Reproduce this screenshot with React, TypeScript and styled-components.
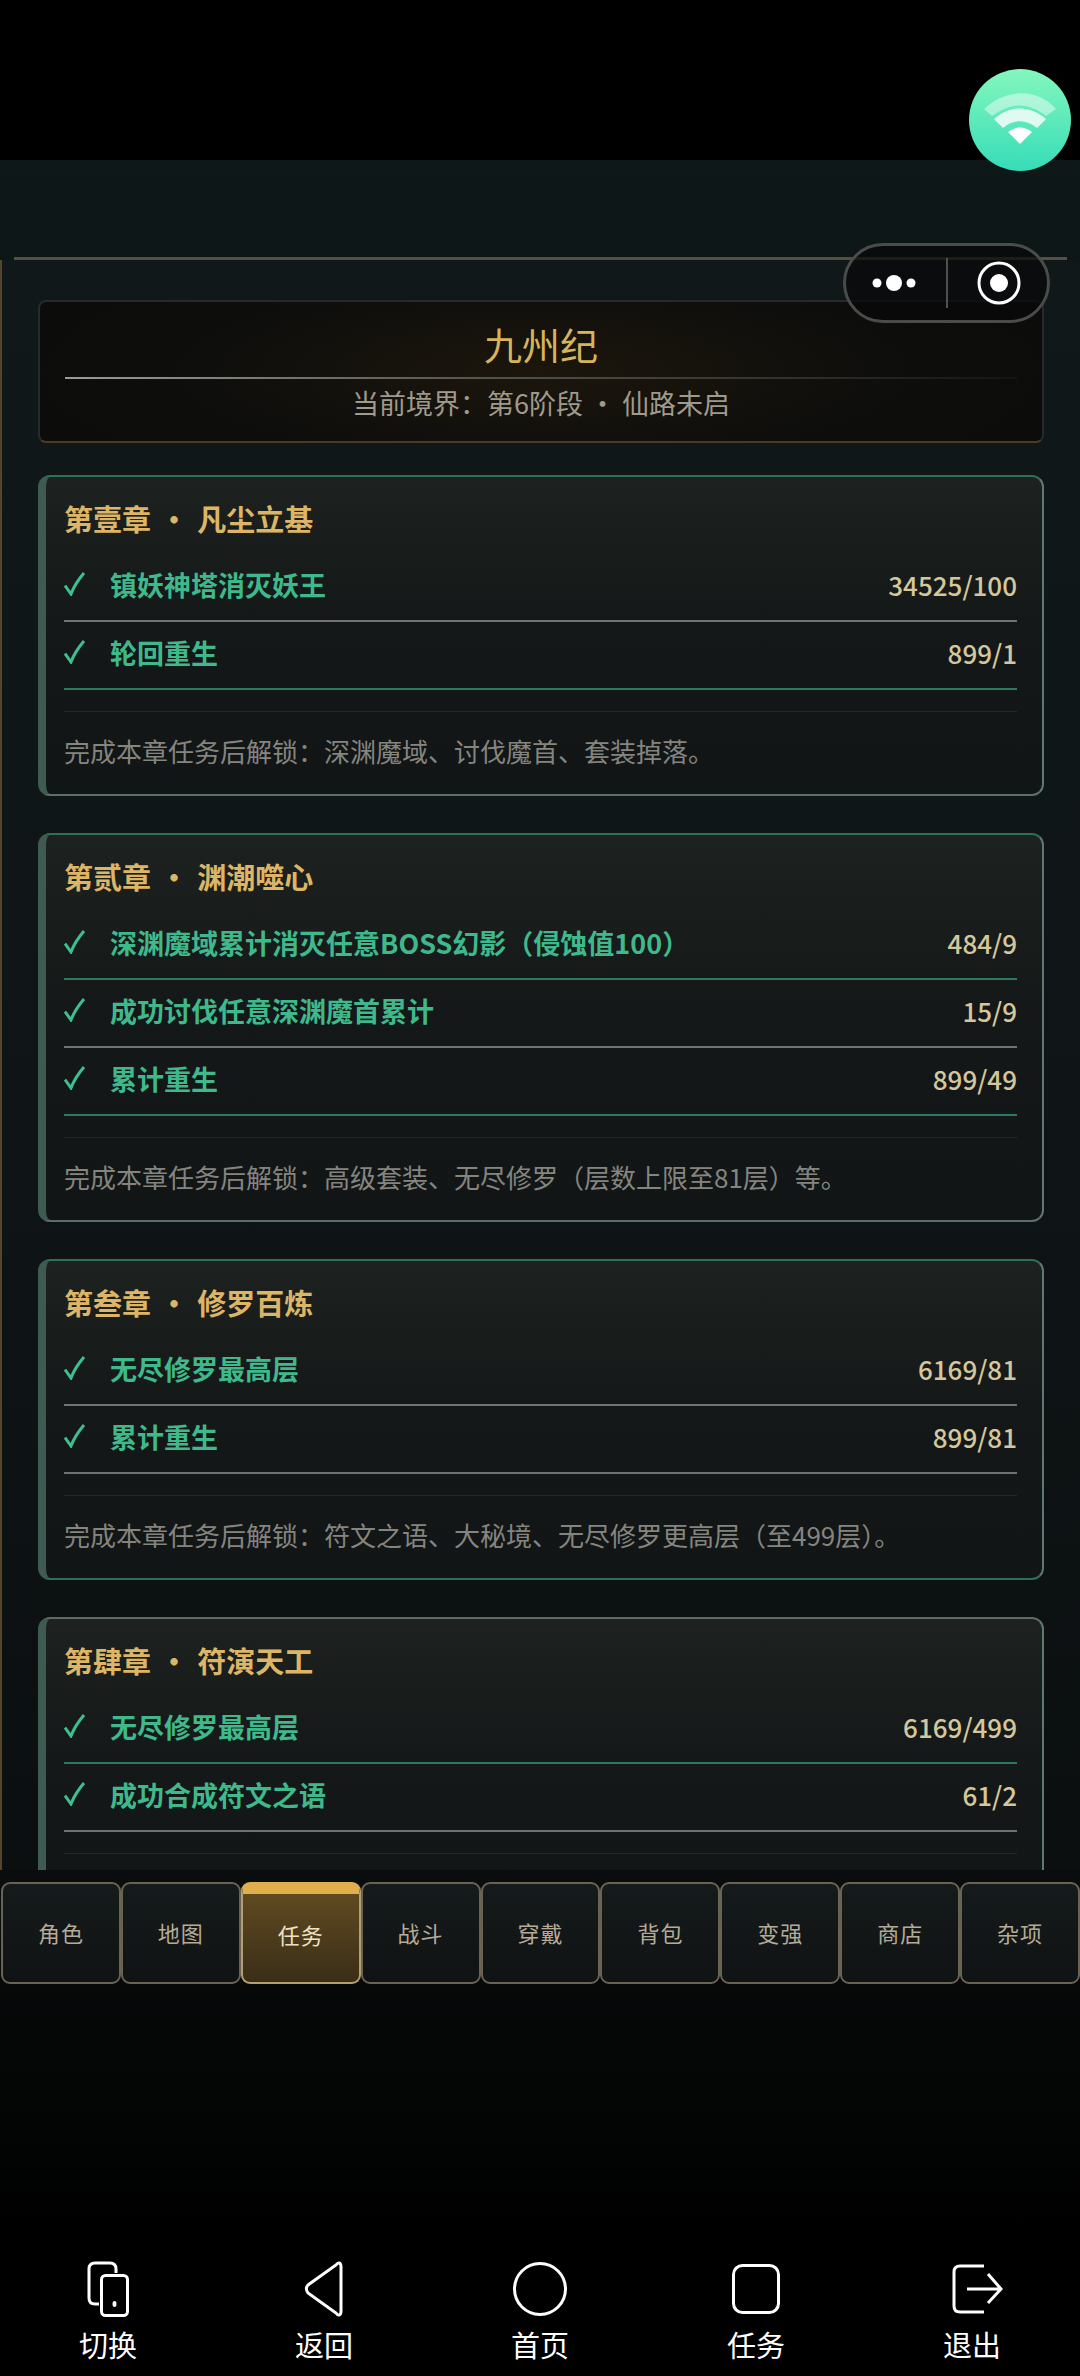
import { FunctionComponent } from "react";
import styled, { createGlobalStyle } from "styled-components";

const GlobalStyle = createGlobalStyle`
	html, body {
		margin: 0;
		padding: 0;
		background: #000;
		font-family: "Noto Sans CJK SC", "Noto Sans", sans-serif;
	}
	* {
		box-sizing: border-box;
	}
`;

const Screen = styled.div`
	position: relative;
	width: 1080px;
	height: 2376px;
	display: flex;
	flex-direction: column;
	overflow: hidden;
	background: #000;
`;

const TopBlack = styled.div`
	height: 160px;
	flex: none;
	background: #000;
`;

const Game = styled.div`
	flex: 1;
	display: flex;
	flex-direction: column;
	padding-top: 97px;
	background: linear-gradient(180deg, #0e1818 0%, #0d1416 12%, #0e1416 40%, #0c1012 78%, #050707 90%, #000 100%);
`;

const PanelRim = styled.div`
	height: 3px;
	flex: none;
	margin: 0 13px 0 14px;
	background: #5a4e3e;
`;

const Panel = styled.div`
	height: 1610px;
	flex: none;
	padding: 40px 36px 0 36px;
	overflow: hidden;
	border-left: 2px solid #54452c;
	background: linear-gradient(180deg, #10181a 0%, #0f1517 50%, #0b0f10 100%);
	display: flex;
	flex-direction: column;
	gap: 37px;
`;

const Header = styled.div`
	flex: none;
	height: 143px;
	margin-bottom: -5px;
	display: flex;
	flex-direction: column;
	align-items: center;
	padding: 0 25px;
	border: 2px solid #252b2c;
	border-bottom-color: #4a3b29;
	border-radius: 8px;
	background: radial-gradient(ellipse 50% 90% at 50% 50%, #1c160c 0%, #0e0e0c 70%, #0c0c0b 100%);
`;

const Title = styled.div`
	height: 75px;
	line-height: 84px;
	font-size: 38px;
	color: #d6b45c;
`;

const HeaderRule = styled.div`
	width: 100%;
	height: 2px;
	flex: none;
	background: linear-gradient(90deg, #9a9c96 0%, #50524e 45%, rgba(80, 80, 80, 0.1) 100%);
`;

const Subtitle = styled.div`
	line-height: 47px;
	font-size: 27px;
	color: #a09a8d;
`;

const Card = styled.section<{ $greyTop?: boolean; $greenBottom?: boolean }>`
	flex: none;
	padding: 0 25px 0 18px;
	border: 2px solid #5c7a70;
	border-top-color: ${(p) => (p.$greyTop ? "#5f6a66" : "#2f6f58")};
	border-bottom-color: ${(p) => (p.$greenBottom ? "#2f6f58" : "#5c706a")};
	border-left: 8px solid #3f5a50;
	border-radius: 12px;
	background: linear-gradient(180deg, #1d211f 0%, #141818 45%, #111516 100%);
`;

const ChapterTitle = styled.h2`
	margin: 0;
	height: 77px;
	line-height: 82px;
	font-size: 29px;
	font-weight: 700;
	word-spacing: 2px;
	color: #dcb566;
	white-space: pre;
`;

const Row = styled.div<{ $green?: boolean }>`
	height: 68px;
	padding-bottom: 6px;
	display: flex;
	align-items: center;
	border-bottom: 2px solid ${(p) => (p.$green ? "#2f7a5c" : "#6e7472")};
`;

const CheckSlot = styled.span`
	width: 46px;
	flex: none;
	display: flex;
	align-items: center;
`;

const RowName = styled.span`
	flex: 1;
	font-size: 27px;
	font-weight: 700;
	color: #3fb98c;
`;

const RowValue = styled.span`
	font-size: 26px;
	font-weight: 500;
	color: #d5c79c;
`;

const Note = styled.p`
	margin: 21px 0 0;
	height: 83px;
	line-height: 78px;
	border-top: 1px solid #22282a;
	font-size: 26px;
	color: #858580;
	white-space: nowrap;
`;

const TabBar = styled.nav`
	flex: none;
	height: 102px;
	margin-top: 12px;
	padding-left: 1px;
	display: grid;
	grid-template-columns: repeat(9, 1fr);
`;

const Tab = styled.div<{ $active?: boolean }>`
	display: flex;
	align-items: center;
	justify-content: center;
	padding-bottom: ${(p) => (p.$active ? "8px" : "2px")};
	border: 2px solid ${(p) => (p.$active ? "#b59f70" : "#6a6253")};
	border-top: ${(p) => (p.$active ? "12px solid #dfae4d" : "2px solid #6a6253")};
	border-radius: 9px;
	font-size: 22px;
	letter-spacing: 1px;
	color: ${(p) => (p.$active ? "#efe2c2" : "#b5ab97")};
	background: ${(p) => (p.$active ? "linear-gradient(180deg, #5f4a20 0%, #3a2e18 100%)" : "linear-gradient(180deg, #151a1b 0%, #101314 100%)")};
`;

const BottomNav = styled.nav`
	flex: none;
	height: 136px;
	display: grid;
	grid-template-columns: repeat(5, 216px);
	background: #000;
`;

const NavItem = styled.div`
	display: flex;
	flex-direction: column;
	align-items: center;
	color: #fff;
`;

const NavIcon = styled.div<{ $shift?: number }>`
	height: 56px;
	margin-top: 21px;
	margin-left: ${(p) => p.$shift ?? 0}px;
	display: flex;
	align-items: center;
`;

const NavLabel = styled.span`
	margin-top: 6px;
	line-height: 42px;
	font-size: 29px;
	color: #fff;
`;

const WifiBall = styled.div`
	position: absolute;
	top: 69px;
	left: 969px;
	width: 102px;
	height: 102px;
	border-radius: 50%;
	display: flex;
	align-items: center;
	justify-content: center;
	background: linear-gradient(180deg, #84f7bd 0%, #36dcb9 100%);
`;

const Capsule = styled.div`
	position: absolute;
	top: 243px;
	left: 843px;
	width: 207px;
	height: 80px;
	border: 3px solid #4a4c4c;
	border-radius: 40px;
	display: flex;
	align-items: center;
	background: rgba(8, 8, 8, 0.72);
`;

const CapsuleSide = styled.div<{ $end?: boolean }>`
	flex: 1;
	display: flex;
	align-items: center;
	justify-content: center;
	padding: ${(p) => (p.$end ? "0 0 0 3px" : "0 4px 0 0")};
`;

const CapsuleRule = styled.div`
	width: 2px;
	height: 50px;
	background: #4f5050;
`;

const Check = () => (
	<svg width="24" height="24" viewBox="0 0 24 24" fill="none" stroke="#3fbf90" strokeWidth="3">
		<path d="M1 13.5 L7 22 C10 14 14 8 20 1" />
	</svg>
);

const WifiIcon = () => (
	<svg width="76" height="56" viewBox="0 0 76 56" fill="#fff">
		<path opacity="0.45" d="M0 17 C22 -4 54 -4 72 17 L62 24 C44 10 28 10 8 24 Z" transform="translate(2 0)" />
		<path opacity="0.8" d="M12 27 C28 13 48 13 64 27 L55 36 C44 27 32 27 21 36 Z" />
		<path d="M26 40 C34 34 42 34 50 40 L38 52 Z" />
	</svg>
);

const DotsIcon = () => (
	<svg width="44" height="20" viewBox="0 0 44 20" fill="#fff">
		<circle cx="5" cy="10" r="4.5" />
		<circle cx="22" cy="10" r="8" />
		<circle cx="39" cy="10" r="4.5" />
	</svg>
);

const RingIcon = () => (
	<svg width="44" height="44" viewBox="0 0 44 44" fill="none">
		<circle cx="22" cy="22" r="20" stroke="#fff" strokeWidth="3" />
		<circle cx="22" cy="22" r="9" fill="#fff" />
	</svg>
);

const SwitchIcon = () => (
	<svg width="42" height="56" viewBox="0 0 42 56" fill="none" stroke="#fff" strokeWidth="3">
		<path d="M29 12 V8 C29 4 27 2 23 2 H8 C4 2 2 4 2 8 V37 C2 41 4 43 8 43 H12" />
		<rect x="14.5" y="14.5" width="26" height="40" rx="4" />
		<ellipse cx="27.5" cy="43" rx="2" ry="3" fill="#fff" stroke="none" />
	</svg>
);

const BackIcon = () => (
	<svg width="40" height="56" viewBox="0 0 40 56" fill="none" stroke="#fff" strokeWidth="3">
		<path d="M37 6 C37 1 34 1 32 4 L4 24 C2 26 2 29 4 32 L32 52 C34 55 37 55 37 50 Z" />
	</svg>
);

const HomeIcon = () => (
	<svg width="54" height="56" viewBox="0 0 54 56" fill="none" stroke="#fff" strokeWidth="3">
		<circle cx="27" cy="28" r="25.5" />
	</svg>
);

const SquareIcon = () => (
	<svg width="48" height="50" viewBox="0 0 48 50" fill="none" stroke="#fff" strokeWidth="3">
		<rect x="1.5" y="1.5" width="45" height="47" rx="9" />
	</svg>
);

const ExitIcon = () => (
	<svg width="52" height="50" viewBox="0 0 52 50" fill="none" stroke="#fff" strokeWidth="3">
		<path d="M32 2 H8 C4 2 2 4 2 8 V42 C2 46 4 48 8 48 H32" />
		<path d="M15 25 H49 M36 10 L49 25 L36 39" />
	</svg>
);

type Task = { name: string; value: string; green?: boolean };
type Chapter = { title: string; tasks: Task[]; note: string; greyTop?: boolean; greenBottom?: boolean };

const chapters: Chapter[] = [
	{
		title: "第壹章 · 凡尘立基",
		tasks: [
			{ name: "镇妖神塔消灭妖王", value: "34525/100" },
			{ name: "轮回重生", value: "899/1", green: true }
		],
		note: "完成本章任务后解锁：深渊魔域、讨伐魔首、套装掉落。"
	},
	{
		title: "第贰章 · 渊潮噬心",
		tasks: [
			{ name: "深渊魔域累计消灭任意BOSS幻影（侵蚀值100）", value: "484/9", green: true },
			{ name: "成功讨伐任意深渊魔首累计", value: "15/9" },
			{ name: "累计重生", value: "899/49", green: true }
		],
		note: "完成本章任务后解锁：高级套装、无尽修罗（层数上限至81层）等。"
	},
	{
		title: "第叁章 · 修罗百炼",
		tasks: [
			{ name: "无尽修罗最高层", value: "6169/81" },
			{ name: "累计重生", value: "899/81" }
		],
		note: "完成本章任务后解锁：符文之语、大秘境、无尽修罗更高层（至499层）。",
		greenBottom: true
	},
	{
		title: "第肆章 · 符演天工",
		tasks: [
			{ name: "无尽修罗最高层", value: "6169/499", green: true },
			{ name: "成功合成符文之语", value: "61/2" }
		],
		note: " ",
		greyTop: true
	}
];

const tabs = ["角色", "地图", "任务", "战斗", "穿戴", "背包", "变强", "商店", "杂项"];

const navItems = [
	{ label: "切换", icon: <SwitchIcon />, shift: 0 },
	{ label: "返回", icon: <BackIcon />, shift: 0 },
	{ label: "首页", icon: <HomeIcon />, shift: 0 },
	{ label: "任务", icon: <SquareIcon />, shift: 0 },
	{ label: "退出", icon: <ExitIcon />, shift: 12 }
];

const App: FunctionComponent = () => {
	return (
		<Screen>
			<GlobalStyle />
			<TopBlack />
			<Game>
				<PanelRim />
				<Panel>
					<Header>
						<Title>九州纪</Title>
						<HeaderRule />
						<Subtitle>当前境界：第6阶段 · 仙路未启</Subtitle>
					</Header>
					{chapters.map((c) => (
						<Card key={c.title} $greyTop={c.greyTop} $greenBottom={c.greenBottom}>
							<ChapterTitle>{c.title}</ChapterTitle>
							{c.tasks.map((t) => (
								<Row key={t.name} $green={t.green}>
									<CheckSlot>
										<Check />
									</CheckSlot>
									<RowName>{t.name}</RowName>
									<RowValue>{t.value}</RowValue>
								</Row>
							))}
							<Note>{c.note}</Note>
						</Card>
					))}
				</Panel>
				<TabBar>
					{tabs.map((t) => (
						<Tab key={t} $active={t === "任务"}>
							{t}
						</Tab>
					))}
				</TabBar>
			</Game>
			<BottomNav>
				{navItems.map((n) => (
					<NavItem key={n.label}>
						<NavIcon $shift={n.shift}>{n.icon}</NavIcon>
						<NavLabel>{n.label}</NavLabel>
					</NavItem>
				))}
			</BottomNav>
			<WifiBall>
				<WifiIcon />
			</WifiBall>
			<Capsule>
				<CapsuleSide>
					<DotsIcon />
				</CapsuleSide>
				<CapsuleRule />
				<CapsuleSide $end>
					<RingIcon />
				</CapsuleSide>
			</Capsule>
		</Screen>
	);
};

export default App;
